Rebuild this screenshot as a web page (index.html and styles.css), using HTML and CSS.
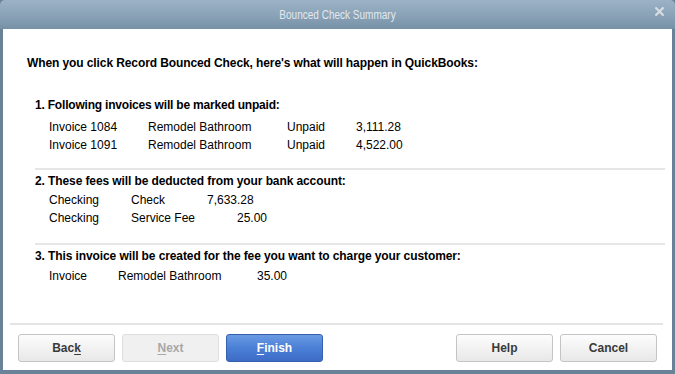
FILE: index.html
```html
<!DOCTYPE html>
<html>
<head>
<meta charset="utf-8">
<link rel="stylesheet" href="styles.css">
</head>
<body>
<div class="window">
  <div class="titlebar">
    <span class="title">Bounced Check Summary</span>
    <span class="close"><svg width="9" height="9" viewBox="0 0 9 9"><path d="M1.2 1.2 L7.8 7.8 M7.8 1.2 L1.2 7.8" stroke="#d6dde3" stroke-width="2.2" stroke-linecap="square"/></svg></span>
  </div>
  <div class="client">
    <div class="main">
      <p class="intro">When you click Record Bounced Check, here's what will happen in QuickBooks:</p>
      <div class="section s1">
        <h2 class="heading">1. Following invoices will be marked unpaid:</h2>
        <div class="grid g1">
          <span>Invoice 1084</span><span>Remodel Bathroom</span><span>Unpaid</span><span>3,111.28</span>
          <span>Invoice 1091</span><span>Remodel Bathroom</span><span>Unpaid</span><span>4,522.00</span>
        </div>
      </div>
      <div class="section s2">
        <h2 class="heading">2. These fees will be deducted from your bank account:</h2>
        <div class="grid g2">
          <span>Checking</span><span>Check</span><span>7,633.28</span>
          <span>Checking</span><span>Service Fee</span><span class="fee">25.00</span>
        </div>
      </div>
      <div class="section s3">
        <h2 class="heading">3. This invoice will be created for the fee you want to charge your customer:</h2>
        <div class="grid g3">
          <span>Invoice</span><span>Remodel Bathroom</span><span>35.00</span>
        </div>
      </div>
    </div>
    <div class="footer">
      <div class="btn-group">
        <button class="btn">Bac<u>k</u></button>
        <button class="btn disabled"><u>N</u>ext</button>
        <button class="btn primary"><u>F</u>inish</button>
      </div>
      <div class="btn-group">
        <button class="btn">Help</button>
        <button class="btn">Cancel</button>
      </div>
    </div>
  </div>
</div>
</body>
</html>
```
FILE: styles.css
```css
* { box-sizing: border-box; }
html, body { margin: 0; padding: 0; }
body {
  width: 675px;
  height: 374px;
  overflow: hidden;
  font-family: "Liberation Sans", Arial, sans-serif;
  font-size: 12px;
  color: #000;
  background: #6b8296;
}
.window {
  width: 675px;
  height: 374px;
  display: flex;
  flex-direction: column;
  padding: 0 3px 4px 3px;
  background: #6a8297;
  border-radius: 5px 5px 0 0;
}
.titlebar {
  height: 29px;
  flex: none;
  margin: 0 -3px;
  padding: 0 3px;
  background: linear-gradient(#9cb3c6, #87a0b5 60%, #7690a6);
  border-radius: 5px 5px 0 0;
  display: flex;
  align-items: center;
  justify-content: center;
  position: relative;
}
.title {
  display: inline-block;
  font-family: "Liberation Sans", Arial, sans-serif;
  font-size: 13px;
  color: #e2e8ed;
  transform: scaleX(0.77);
  margin-top: -1px;
}
.close {
  position: absolute;
  right: 11px;
  top: 7px;
  width: 9px;
  height: 9px;
  display: block;
}
.close svg { display: block; }
.client {
  flex: 1;
  background: #fff;
  display: flex;
  flex-direction: column;
}
.main {
  flex: 1;
  padding: 25px 7px 0 24px;
}
.intro {
  margin: 0;
  line-height: 18px;
  font-weight: bold;
  letter-spacing: -0.1px;
}
.section {
  margin-left: 8px;
}
.section + .section {
  border-top: 2px solid #e6e6e6;
}
.s1 { margin-top: 24px; padding-bottom: 14px; }
.s2 { padding-top: 2px; padding-bottom: 16px; }
.s3 { padding-top: 2px; }
.heading {
  margin: 0;
  font-size: 12px;
  font-weight: bold;
  line-height: 18px;
  letter-spacing: -0.1px;
}
.s1 .heading { letter-spacing: -0.2px; }
.grid {
  display: grid;
  padding-left: 14px;
  line-height: 18px;
}
.g1 { margin-top: 4px; grid-template-columns: 99px 139px 69px auto; }
.g2 { margin-top: 1px; grid-template-columns: 82px 76px auto; }
.g3 { margin-top: 2px; grid-template-columns: 69px 139px auto; }
.fee { padding-left: 30px; }
.footer {
  flex: none;
  margin: 0 9px 0 7px;
  border-top: 2px solid #e4e4e4;
  padding: 9px 6px 8px 8px;
  display: flex;
  justify-content: space-between;
}
.btn-group {
  display: flex;
  gap: 7px;
}
.btn {
  width: 97px;
  height: 28px;
  margin: 0;
  padding: 0;
  font-family: "Liberation Sans", Arial, sans-serif;
  font-size: 12px;
  font-weight: bold;
  color: #3a3a3a;
  background: linear-gradient(#fdfdfd, #f1f1f1 55%, #e8e8e8);
  border: 1px solid #c4c4c4;
  border-radius: 3px;
}
.btn.disabled {
  color: #a8a8a8;
  background: #f0f0f0;
  border-color: #dedede;
}
.btn.primary {
  color: #fff;
  background: linear-gradient(#6a9be2, #4b7fd6 50%, #3d6cc6);
  border-color: #3460ad;
}
.btn u { text-decoration-thickness: 1px; text-underline-offset: 2px; }
```
